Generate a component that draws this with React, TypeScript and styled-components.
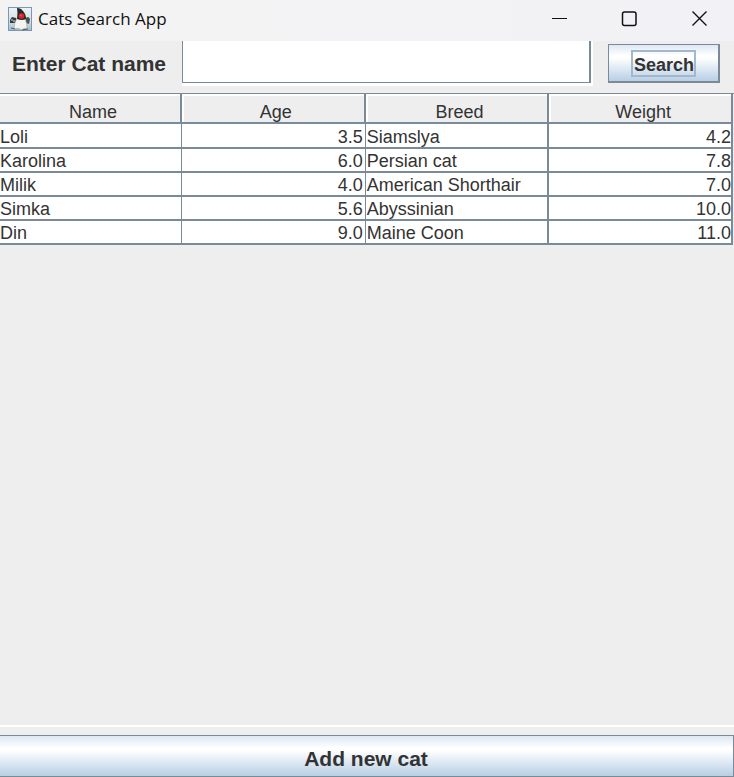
import React, { useState } from "react";
import styled, { createGlobalStyle } from "styled-components";

const steel = "#7a8a99";
const panel = "#eeeeee";
const metal = "linear-gradient(#dde8f3 0%, #ffffff 30%, #ffffff 36%, #dde8f3 66%, #b8cfe5 100%)";

const GlobalStyle = createGlobalStyle`
  * { box-sizing: border-box; }
  body { margin: 0; background: ${panel}; color: #333333; font-family: "Liberation Sans", Arial, sans-serif; }
  button, input { font: inherit; color: inherit; border-radius: 0; }
`;

const Window = styled.div`
  display: flex;
  flex-direction: column;
  min-height: 100vh;
`;

const TitleBar = styled.header`
  display: flex;
  align-items: center;
  height: 41px;
  padding: 0 0 4px 8px;
  background: linear-gradient(90deg, #f3f3f3, #f2f2f6);
  color: #111111;
`;

const Title = styled.h1`
  flex: 1;
  margin: 0 0 0 6px;
  font: 400 17px/24px "Open Sans", "Noto Sans", sans-serif;
`;

const CaptionButton = styled.button`
  display: grid;
  place-items: center;
  width: 70px;
  height: 37px;
  padding: 0;
  border: 0;
  background: transparent;
`;

const SearchForm = styled.form`
  display: flex;
  align-items: flex-start;
  height: 52px;
  padding: 0 14px 0 12px;
`;

const SearchLabel = styled.label`
  width: 170px;
  font-size: 21px;
  font-weight: bold;
  line-height: 46px;
  white-space: nowrap;
`;

const FieldFrame = styled.div`
  flex: 1;
  min-width: 0;
  padding-right: 2px;
  padding-bottom: 3px;
  background: #ffffff;
`;

const SearchField = styled.input`
  display: block;
  width: 100%;
  height: 42px;
  padding: 0 6px;
  border: 1px solid ${steel};
  border-top: 0;
  border-right-width: 2px;
  background: #ffffff;
  font-size: 21px;
  outline: 0;
`;

const SearchButton = styled.button`
  width: 112px;
  height: 39px;
  margin: 3px 0 0 15px;
  padding: 0;
  border: 1px solid ${steel};
  border-right-width: 2px;
  border-bottom-width: 2px;
  background: ${metal};
  font-size: 18px;
  font-weight: bold;
`;

const FocusBox = styled.span`
  display: inline-block;
  padding: 3px 0 0 1px;
  border: 2px solid #a3b8cc;
  line-height: 20px;
`;

const ScrollPane = styled.main`
  flex: 1;
  border-top: 1px solid ${steel};
  border-bottom: 2px solid #ffffff;
`;

const CatTable = styled.table`
  width: calc(100% - 1px);
  table-layout: fixed;
  border-collapse: separate;
  border-spacing: 0;
  font-size: 18px;
  line-height: 20px;
`;

const HeaderCell = styled.th`
  height: 30px;
  padding: 7px 0 0 6px;
  border-right: 2px solid ${steel};
  border-bottom: 2px solid ${steel};
  background: ${panel};
  box-shadow: inset 2px 2px #ffffff;
  font-weight: normal;
  line-height: 20px;

  &:first-child { width: 182px; box-shadow: inset 0 2px #ffffff; }
`;

const Cell = styled.td<{ $numeric?: boolean }>`
  padding: 1px 1px 0;
  border-right: 1px solid ${steel};
  border-bottom: 2px solid ${steel};
  background: #ffffff;
  text-align: ${({ $numeric }) => ($numeric ? "right" : "left")};

  &:first-child { padding-left: 0; }
  &:nth-child(n + 3) { border-right-width: 2px; }
  &:nth-child(2) { padding-right: 2px; }
  &:last-child { padding-right: 0; }
`;

const Row = styled.tr`
  height: 24px;

  &:first-child { height: 25px; }
  &:first-child ${Cell} { padding-top: 2px; }
`;

const AddButton = styled.button`
  height: 42px;
  margin-top: 8px;
  padding: 6px 1px 0 0;
  border: 1px solid ${steel};
  border-left: 0;
  background: ${metal};
  font-size: 21px;
  font-weight: bold;
`;

const DukeIcon = () => (
  <svg width="24" height="24" viewBox="0 0 24 24" aria-hidden="true">
    <defs>
      <linearGradient id="sky" x1="0" y1="0" x2="0" y2="1">
        <stop offset="0" stopColor="#edf2f5" />
        <stop offset="0.6" stopColor="#d5dfe6" />
        <stop offset="1" stopColor="#a4b8c8" />
      </linearGradient>
    </defs>
    <rect x=".5" y=".5" width="23" height="23" fill="url(#sky)" stroke="#7a98b1" />
    <path d="M2 13 L4 10 L8 11 L9 13 L7 16 L2 16Z" fill="#34393f" />
    <path d="M3 12h2v2H3z" fill="#5f93bd" />
    <path d="M5 13h2v2H5z" fill="#a78d62" />
    <path d="M17 12 Q20 8 22 12 L21 17 L18 16Z" fill="#4c5053" />
    <path d="M9 11 L17 11 Q19 16 19 22 Q16 20 14 23 Q10 20 6 22 Q6 16 9 11Z" fill="#f4f4f1" stroke="#a5a5a1" strokeWidth=".6" />
    <path d="M9 1 Q13 1 15 4 Q18 7 18 12 Q14 14 9 12 Q10 6 9 1Z" fill="#25292e" />
    <circle cx="13.5" cy="9" r="2.8" fill="#e22229" />
    <circle cx="12.8" cy="8.2" r=".8" fill="#fb5a4f" />
    <path d="M3 21 L7 22 M14 23 L20 22" stroke="#555c62" fill="none" />
  </svg>
);

const columns = ["Name", "Age", "Breed", "Weight"];
const cats = [
  { name: "Loli", age: "3.5", breed: "Siamslya", weight: "4.2" },
  { name: "Karolina", age: "6.0", breed: "Persian cat", weight: "7.8" },
  { name: "Milik", age: "4.0", breed: "American Shorthair", weight: "7.0" },
  { name: "Simka", age: "5.6", breed: "Abyssinian", weight: "10.0" },
  { name: "Din", age: "9.0", breed: "Maine Coon", weight: "11.0" },
];

export default function App() {
  const [query, setQuery] = useState("");
  return (
    <Window>
      <GlobalStyle />
      <TitleBar>
        <DukeIcon />
        <Title>Cats Search App</Title>
        <CaptionButton aria-label="Minimize">
          <svg width="16" height="16" stroke="#111" fill="none"><path d="M1 7.5h15" /></svg>
        </CaptionButton>
        <CaptionButton aria-label="Maximize">
          <svg width="16" height="16" stroke="#111" strokeWidth="1.5" fill="none"><rect x="1.5" y="1" width="13.5" height="13.5" rx="2" /></svg>
        </CaptionButton>
        <CaptionButton aria-label="Close">
          <svg width="16" height="16" stroke="#111" strokeWidth="1.4" fill="none"><path d="M1.5 .5l14 14M15.5 .5l-14 14" /></svg>
        </CaptionButton>
      </TitleBar>
      <SearchForm onSubmit={(e: React.FormEvent) => e.preventDefault()}>
        <SearchLabel htmlFor="cat-name">Enter Cat name</SearchLabel>
        <FieldFrame>
          <SearchField id="cat-name" value={query} onChange={(e: React.ChangeEvent<HTMLInputElement>) => setQuery(e.target.value)} />
        </FieldFrame>
        <SearchButton type="submit"><FocusBox>Search</FocusBox></SearchButton>
      </SearchForm>
      <ScrollPane>
        <CatTable>
          <thead>
            <tr>{columns.map((c) => <HeaderCell key={c} scope="col">{c}</HeaderCell>)}</tr>
          </thead>
          <tbody>
            {cats.map((cat) => (
              <Row key={cat.name}>
                <Cell>{cat.name}</Cell>
                <Cell $numeric>{cat.age}</Cell>
                <Cell>{cat.breed}</Cell>
                <Cell $numeric>{cat.weight}</Cell>
              </Row>
            ))}
          </tbody>
        </CatTable>
      </ScrollPane>
      <AddButton type="button">Add new cat</AddButton>
    </Window>
  );
}
